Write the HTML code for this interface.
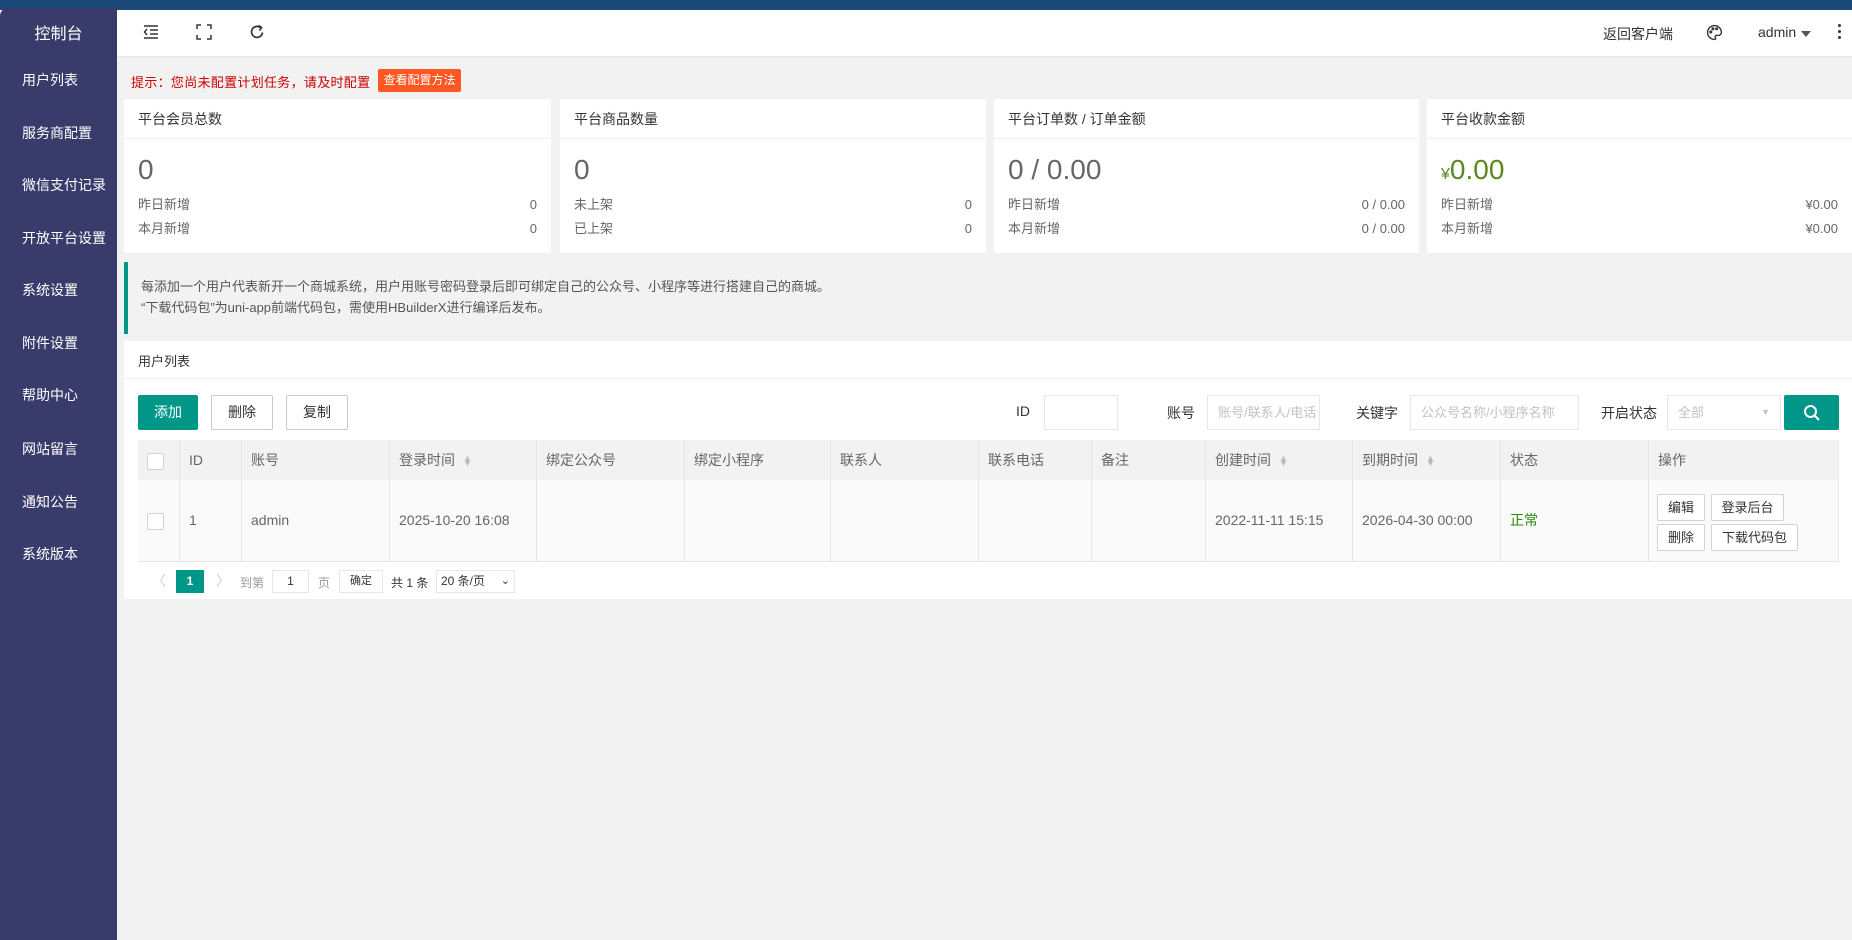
<!DOCTYPE html>
<html><head><meta charset="utf-8"><style>
*{margin:0;padding:0;box-sizing:border-box}
body{width:1852px;height:940px;overflow:hidden;background:#f2f2f2;font-family:"Liberation Sans","Noto Sans CJK SC",sans-serif;font-size:14px;color:#333;position:relative}
.a{position:absolute}
.top{left:0;top:0;width:1852px;height:10px;background:#1b4a78}
.side{left:0;top:8px;width:117px;height:932px;background:#393b6b;border-top-left-radius:8px}
.side div{position:absolute;left:22px;color:#fff;font-size:14px}
.hdr{left:117px;top:10px;width:1735px;height:46px;background:#fff;box-shadow:0 1px 2px rgba(0,0,0,.06)}
.card{background:#fff;top:99px;height:154px}
.card .t{position:absolute;left:14px;top:10px;font-size:14px;color:#333}
.card .ln{position:absolute;left:0;right:0;top:39px;border-top:1px solid #f2f2f2}
.card .n{position:absolute;left:14px;top:55px;font-size:28px;color:#666}
.card .r{position:absolute;left:14px;right:14px;font-size:13px;color:#666;display:flex;justify-content:space-between;line-height:18px}
.btn{position:absolute;height:35px;line-height:33px;text-align:center;border:1px solid #c9c9c9;background:#fff;font-size:14px;color:#333;border-radius:2px}
.inp{position:absolute;top:395px;height:35px;border:1px solid #e6e6e6;background:#fff;font-size:13px;color:#c2c2c2;line-height:33px;padding-left:10px;white-space:nowrap;overflow:hidden}
.lbl{position:absolute;top:403px;font-size:14px;color:#333}
.th,.td{position:absolute;border-right:1px solid #e6e6e6;font-size:14px;color:#666;padding-left:9px}
.th{top:440px;height:40px;line-height:40px;background:#f2f2f2}
.td{top:480px;height:81px;line-height:81px;background:#fafafa}
.sort{display:inline-block;margin-left:8px;font-size:9px;color:#bbb;line-height:5px;vertical-align:middle}
.ob{position:absolute;height:27px;line-height:25px;border:1px solid #d2d2d2;background:#fff;font-size:13px;color:#333;text-align:center;border-radius:2px}
.cb{display:inline-block;width:17px;height:17px;border:1px solid #d2d2d2;background:#fff;border-radius:2px;vertical-align:middle}
</style></head><body>
<div class="a top"></div>
<div class="a side">
<div style="left:0;width:117px;text-align:center;top:12px;font-size:16px">控制台</div>
<div style="top:62px">用户列表</div>
<div style="top:115px">服务商配置</div>
<div style="top:167px">微信支付记录</div>
<div style="top:220px">开放平台设置</div>
<div style="top:272px">系统设置</div>
<div style="top:325px">附件设置</div>
<div style="top:377px">帮助中心</div>
<div style="top:431px">网站留言</div>
<div style="top:484px">通知公告</div>
<div style="top:536px">系统版本</div>
</div>
<div class="a hdr">
<svg class="a" style="left:26px;top:14px" width="16" height="16" viewBox="0 0 16 16" fill="none" stroke="#333" stroke-width="1.5"><path d="M1 2h14M7 6h8M7 10h8M1 14h14M4 5L1.5 8 4 11"/></svg>
<svg class="a" style="left:79px;top:14px" width="16" height="16" viewBox="0 0 16 16" fill="none" stroke="#333" stroke-width="1.5"><path d="M1 5V1h4M11 1h4v4M15 11v4h-4M5 15H1v-4"/></svg>
<svg class="a" style="left:132px;top:13px" width="16" height="17" viewBox="0 0 16 17" fill="none" stroke="#333" stroke-width="1.7"><path d="M13.5 9.5A5.5 5.5 0 1 1 11 4.3"/><path d="M9.5 2.5l3 2-2 3" /></svg>
<div class="a" style="left:1486px;top:14px;font-size:14px">返回客户端</div>
<svg class="a" style="left:1589px;top:14px" width="17" height="17" viewBox="0 0 16 16" fill="none" stroke="#333" stroke-width="1.3"><path d="M8 1.5a6.5 6.5 0 1 0 0 13c1.2 0 1.4-1 .8-1.8-.6-.8 0-1.9 1-1.9h1.7A3 3 0 0 0 14.5 8 6.5 6.5 0 0 0 8 1.5z"/><circle cx="4.5" cy="7.5" r=".8"/><circle cx="6.5" cy="4.5" r=".8"/><circle cx="10" cy="4.5" r=".8"/></svg>
<div class="a" style="left:1641px;top:14px;font-size:14px">admin</div>
<div class="a" style="left:1684px;top:21px;border:5px solid transparent;border-top:6px solid #555"></div>
<div class="a" style="left:1721px;top:14px;width:3px;font-size:0"><i style="display:block;width:3px;height:3px;background:#333;border-radius:50%;margin-bottom:3px"></i><i style="display:block;width:3px;height:3px;background:#333;border-radius:50%;margin-bottom:3px"></i><i style="display:block;width:3px;height:3px;background:#333;border-radius:50%"></i></div>
</div>
<div class="a" style="left:131px;top:72px;font-size:13px;color:#c00;letter-spacing:0.3px">提示：您尚未配置计划任务，请及时配置</div>
<div class="a" style="left:378px;top:69px;width:83px;height:23px;background:#ff5722;color:#fff;font-size:12px;line-height:23px;text-align:center;border-radius:2px">查看配置方法</div>

<div class="a card" style="left:124px;width:427px"><div class="t">平台会员总数</div><div class="ln"></div><div class="n">0</div><div class="r" style="top:196px;top:97px"><span>昨日新增</span><span>0</span></div><div class="r" style="top:121px"><span>本月新增</span><span>0</span></div></div>
<div class="a card" style="left:560px;width:426px"><div class="t">平台商品数量</div><div class="ln"></div><div class="n">0</div><div class="r" style="top:97px"><span>未上架</span><span>0</span></div><div class="r" style="top:121px"><span>已上架</span><span>0</span></div></div>
<div class="a card" style="left:994px;width:425px"><div class="t">平台订单数 / 订单金额</div><div class="ln"></div><div class="n">0 / 0.00</div><div class="r" style="top:97px"><span>昨日新增</span><span>0 / 0.00</span></div><div class="r" style="top:121px"><span>本月新增</span><span>0 / 0.00</span></div></div>
<div class="a card" style="left:1427px;width:425px"><div class="t">平台收款金额</div><div class="ln"></div><div class="n" style="color:#5a8a1e"><span style="font-size:16px">¥</span>0.00</div><div class="r" style="top:97px"><span>昨日新增</span><span>¥0.00</span></div><div class="r" style="top:121px"><span>本月新增</span><span>¥0.00</span></div></div>

<div class="a" style="left:124px;top:262px;width:1728px;height:72px;border-left:4px solid #009688;background:#f2f2f2"></div>
<div class="a" style="left:141px;top:276px;font-size:13px;color:#555;line-height:21px">每添加一个用户代表新开一个商城系统，用户用账号密码登录后即可绑定自己的公众号、小程序等进行搭建自己的商城。<br>“下载代码包”为uni-app前端代码包，需使用HBuilderX进行编译后发布。</div>

<div class="a" style="left:124px;top:341px;width:1728px;height:258px;background:#fff"></div>
<div class="a" style="left:124px;top:378px;width:1728px;border-top:1px solid #f2f2f2"></div>
<div class="a" style="left:138px;top:351px;font-size:13px">用户列表</div>
<div class="btn" style="left:138px;top:395px;width:60px;background:#009688;border-color:#009688;color:#fff">添加</div>
<div class="btn" style="left:211px;top:395px;width:62px">删除</div>
<div class="btn" style="left:286px;top:395px;width:62px">复制</div>
<div class="lbl" style="left:1016px">ID</div><div class="inp" style="left:1044px;width:74px"></div>
<div class="lbl" style="left:1167px">账号</div><div class="inp" style="left:1207px;width:113px">账号/联系人/电话</div>
<div class="lbl" style="left:1356px">关键字</div><div class="inp" style="left:1410px;width:169px">公众号名称/小程序名称</div>
<div class="lbl" style="left:1601px">开启状态</div><div class="inp" style="left:1667px;width:114px">全部<span style="position:absolute;right:10px;top:0;font-size:9px">▼</span></div>
<div class="btn" style="left:1784px;top:395px;width:55px;background:#009688;border-color:#009688"><svg style="margin-top:8px" width="18" height="18" viewBox="0 0 18 18" fill="none" stroke="#fff" stroke-width="2"><circle cx="7.5" cy="7.5" r="5.5"/><path d="M11.5 11.5l4.5 4.5"/></svg></div>

<div class="a" style="left:138px;top:440px;width:1701px;height:122px;border:1px solid #e6e6e6"></div>
<div class="th" style="left:138px;width:42px"><span class="cb"></span></div>
<div class="th" style="left:180px;width:62px">ID</div>
<div class="th" style="left:242px;width:148px">账号</div>
<div class="th" style="left:390px;width:147px">登录时间<span class="sort">▲<br>▼</span></div>
<div class="th" style="left:537px;width:148px">绑定公众号</div>
<div class="th" style="left:685px;width:146px">绑定小程序</div>
<div class="th" style="left:831px;width:148px">联系人</div>
<div class="th" style="left:979px;width:113px">联系电话</div>
<div class="th" style="left:1092px;width:114px">备注</div>
<div class="th" style="left:1206px;width:147px">创建时间<span class="sort">▲<br>▼</span></div>
<div class="th" style="left:1353px;width:148px">到期时间<span class="sort">▲<br>▼</span></div>
<div class="th" style="left:1501px;width:148px">状态</div>
<div class="th" style="left:1649px;width:189px;border-right:none">操作</div>
<div class="a" style="left:138px;top:480px;width:1701px;border-top:1px solid #e6e6e6"></div>
<div class="td" style="left:138px;width:42px"><span class="cb"></span></div>
<div class="td" style="left:180px;width:62px">1</div>
<div class="td" style="left:242px;width:148px">admin</div>
<div class="td" style="left:390px;width:147px">2025-10-20 16:08</div>
<div class="td" style="left:537px;width:148px"></div>
<div class="td" style="left:685px;width:146px"></div>
<div class="td" style="left:831px;width:148px"></div>
<div class="td" style="left:979px;width:113px"></div>
<div class="td" style="left:1092px;width:114px"></div>
<div class="td" style="left:1206px;width:147px">2022-11-11 15:15</div>
<div class="td" style="left:1353px;width:148px">2026-04-30 00:00</div>
<div class="td" style="left:1501px;width:148px;color:#2a8a0a">正常</div>
<div class="td" style="left:1649px;width:189px;border-right:none"></div>
<div class="ob" style="left:1657px;top:494px;width:48px">编辑</div>
<div class="ob" style="left:1711px;top:494px;width:73px">登录后台</div>
<div class="ob" style="left:1657px;top:524px;width:48px">删除</div>
<div class="ob" style="left:1711px;top:524px;width:87px">下载代码包</div>

<div class="a" style="left:152px;top:571px;font-size:14px;color:#ccc">〈</div>
<div class="a" style="left:176px;top:570px;width:28px;height:23px;background:#009688;color:#fff;font-size:12px;line-height:23px;text-align:center;font-weight:bold">1</div>
<div class="a" style="left:216px;top:571px;font-size:14px;color:#ccc">〉</div>
<div class="a" style="left:240px;top:574px;font-size:12px;color:#999">到第</div>
<div class="a" style="left:272px;top:570px;width:37px;height:23px;border:1px solid #e6e6e6;font-size:12px;line-height:21px;text-align:center">1</div>
<div class="a" style="left:318px;top:574px;font-size:12px;color:#999">页</div>
<div class="a" style="left:339px;top:570px;width:44px;height:23px;border:1px solid #e6e6e6;font-size:11px;line-height:21px;text-align:center">确定</div>
<div class="a" style="left:391px;top:574px;font-size:12px">共 1 条</div>
<div class="a" style="left:436px;top:570px;width:79px;height:23px;border:1px solid #e6e6e6;font-size:12px;line-height:21px;padding-left:4px">20 条/页<span style="position:absolute;right:4px;font-size:11px">⌄</span></div>
</body></html>
